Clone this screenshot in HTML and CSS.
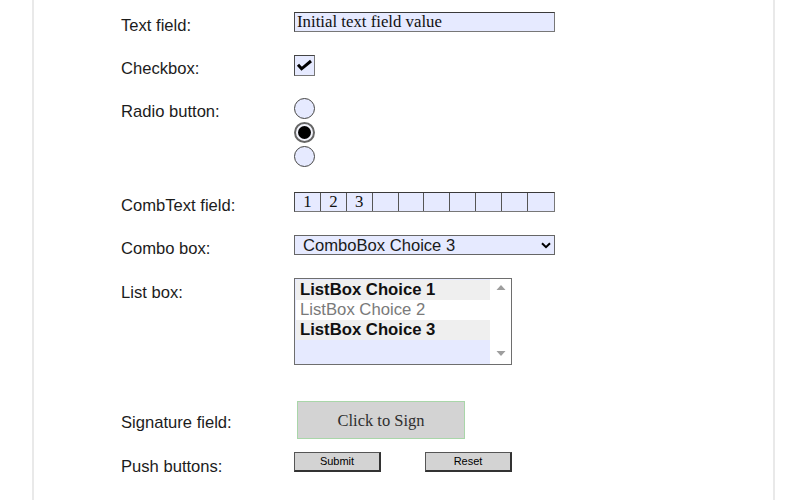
FILE: index.html
```html
<!DOCTYPE html>
<html lang="en">
<head>
<meta charset="utf-8">
<title>Form fields</title>
<link rel="stylesheet" href="styles.css">
</head>
<body>
<div class="page">
  <div class="row r-text">
    <div class="label">Text field:</div>
    <div class="field textfield">Initial text field value</div>
  </div>
  <div class="row r-check">
    <div class="label">Checkbox:</div>
    <div class="checkbox">
      <svg width="19" height="19" viewBox="0 0 19 19"><path d="M3 8.8 L6.6 12.8 L16 5" fill="none" stroke="#000" stroke-width="3"/></svg>
    </div>
  </div>
  <div class="row r-radio">
    <div class="label">Radio button:</div>
    <div class="radios">
      <div class="radio"></div>
      <div class="radio on"></div>
      <div class="radio"></div>
    </div>
  </div>
  <div class="row r-comb">
    <div class="label">CombText field:</div>
    <div class="field comb">
      <span class="cell">1</span><span class="cell">2</span><span class="cell">3</span><span class="cell"></span><span class="cell"></span><span class="cell"></span><span class="cell"></span><span class="cell"></span><span class="cell"></span><span class="cell"></span>
    </div>
  </div>
  <div class="row r-combo">
    <div class="label">Combo box:</div>
    <div class="field combo">
      <span class="combo-text">ComboBox Choice 3</span>
      <svg class="chev" width="10" height="7" viewBox="0 0 10 7"><path d="M1 1.2 L5 5.2 L9 1.2" fill="none" stroke="#000" stroke-width="2"/></svg>
    </div>
  </div>
  <div class="row r-list">
    <div class="label">List box:</div>
    <div class="listbox">
      <div class="options">
        <div class="opt sel">ListBox Choice 1</div>
        <div class="opt dim">ListBox Choice 2</div>
        <div class="opt sel">ListBox Choice 3</div>
      </div>
      <div class="scroll">
        <svg width="10" height="7" viewBox="0 0 10 7"><path d="M0.5 6 L5 1 L9.5 6 Z" fill="#9e9e9e"/></svg>
        <svg width="10" height="7" viewBox="0 0 10 7"><path d="M0.5 1 L5 6 L9.5 1 Z" fill="#9e9e9e"/></svg>
      </div>
    </div>
  </div>
  <div class="row r-sig">
    <div class="label">Signature field:</div>
    <div class="signature">Click to Sign</div>
  </div>
  <div class="row r-push">
    <div class="label">Push buttons:</div>
    <div class="buttons">
      <div class="btn">Submit</div>
      <div class="btn">Reset</div>
    </div>
  </div>
</div>
</body>
</html>
```
FILE: styles.css
```css
* { box-sizing: border-box; }

html, body {
  margin: 0;
  background: #ffffff;
  font-family: "Liberation Sans", Arial, sans-serif;
}

.page {
  margin-left: 32px;
  width: 743px;
  height: 500px;
  overflow: hidden;
  border-left: 2px solid #e9e9e9;
  border-right: 2px solid #e9e9e9;
  background: #fff;
  padding: 12px 0 0 87px;
  display: flex;
  flex-direction: column;
}

.row {
  display: flex;
  align-items: flex-start;
}

/* the label hangs beside its control and never sets the row height */
.label {
  width: 173px;
  flex: none;
  font-size: 16.6px;
  line-height: 20px;
  color: #1c1c1c;
  margin-top: 4px;
  margin-bottom: -25px;
}

.r-text .label { margin-top: 4px; }
.r-check { margin-top: 23px; }
.r-radio { margin-top: 22px; }
.r-comb { margin-top: 25px; }
.r-combo { margin-top: 23px; }
.r-list { margin-top: 23px; }
.r-list .label { margin-top: 5px; }
.r-sig { margin-top: 36px; }
.r-sig .label { margin-top: 12px; }
.r-push { margin-top: 13px; }
.r-push .label { margin-top: 5px; }

.field {
  width: 261px;
  height: 20px;
  background: #e6eaff;
  border: 1px solid #777;
  border-top-color: #3a3a3a;
  border-left-color: #4a4a4a;
}

.textfield {
  font-family: "Liberation Serif", "Times New Roman", serif;
  font-size: 16.8px;
  line-height: 18px;
  padding-left: 2px;
  color: #111;
  white-space: nowrap;
}

.checkbox {
  width: 21px;
  height: 21px;
  background: #e6eaff;
  border: 1px solid #777;
  border-top-color: #444;
  border-left-color: #4a4a4a;
  display: flex;
}

.checkbox svg { display: block; }

.radios {
  display: flex;
  flex-direction: column;
  gap: 3px;
}

.radio {
  width: 21px;
  height: 21px;
  border-radius: 50%;
  background: #e6eaff;
  border: 1px solid #444;
  display: flex;
  align-items: center;
  justify-content: center;
}

.radio.on {
  border: 2px solid #666;
  background: #f2f3fb;
}

.radio.on::after {
  content: "";
  width: 13px;
  height: 13px;
  border-radius: 50%;
  background: #000;
}

.comb {
  display: grid;
  grid-template-columns: repeat(10, 1fr);
  font-family: "Liberation Serif", "Times New Roman", serif;
  font-size: 16.8px;
  line-height: 18px;
  color: #111;
}

.cell {
  border-right: 1px solid #555;
  text-align: center;
}

.cell:last-child { border-right: none; }

.combo {
  display: flex;
  align-items: flex-start;
  justify-content: space-between;
  padding: 1px 3px 0 8px;
  border-color: #666;
}

.combo-text {
  font-size: 16.6px;
  line-height: 18px;
  color: #1a1a1a;
}

.chev { margin-top: 5px; }

.listbox {
  width: 218px;
  height: 87px;
  border: 1px solid #6e6e6e;
  background: #e6eaff;
  display: flex;
  padding: 1px 0 0 1px;
}

.options {
  flex: 1;
}

.opt {
  height: 20px;
  font-size: 16.7px;
  line-height: 20px;
  padding-left: 4px;
  white-space: nowrap;
}

.opt.sel {
  background: #efefef;
  font-weight: bold;
  color: #111;
}

.opt.dim {
  background: #fff;
  color: #7a7a7a;
}

.scroll {
  width: 21px;
  margin-top: -1px;
  background: #fff;
  display: flex;
  flex-direction: column;
  align-items: center;
  justify-content: space-between;
  padding: 5px 0 7px;
}

.scroll svg { display: block; }

.signature {
  margin-left: 3px;
  width: 168px;
  height: 38px;
  background: #d3d3d3;
  border: 1px solid #a9d6a9;
  font-family: "Liberation Serif", "Times New Roman", serif;
  font-size: 16.5px;
  color: #2e2e2e;
  display: flex;
  align-items: center;
  justify-content: center;
  padding-top: 1px;
}

.buttons {
  display: flex;
  gap: 44px;
}

.btn {
  width: 87px;
  height: 20px;
  background: #d3d3d3;
  border: 1px solid #555;
  border-right: 2px solid #333;
  border-bottom: 2px solid #333;
  font-size: 11px;
  line-height: 17px;
  text-align: center;
  color: #000;
}
```
